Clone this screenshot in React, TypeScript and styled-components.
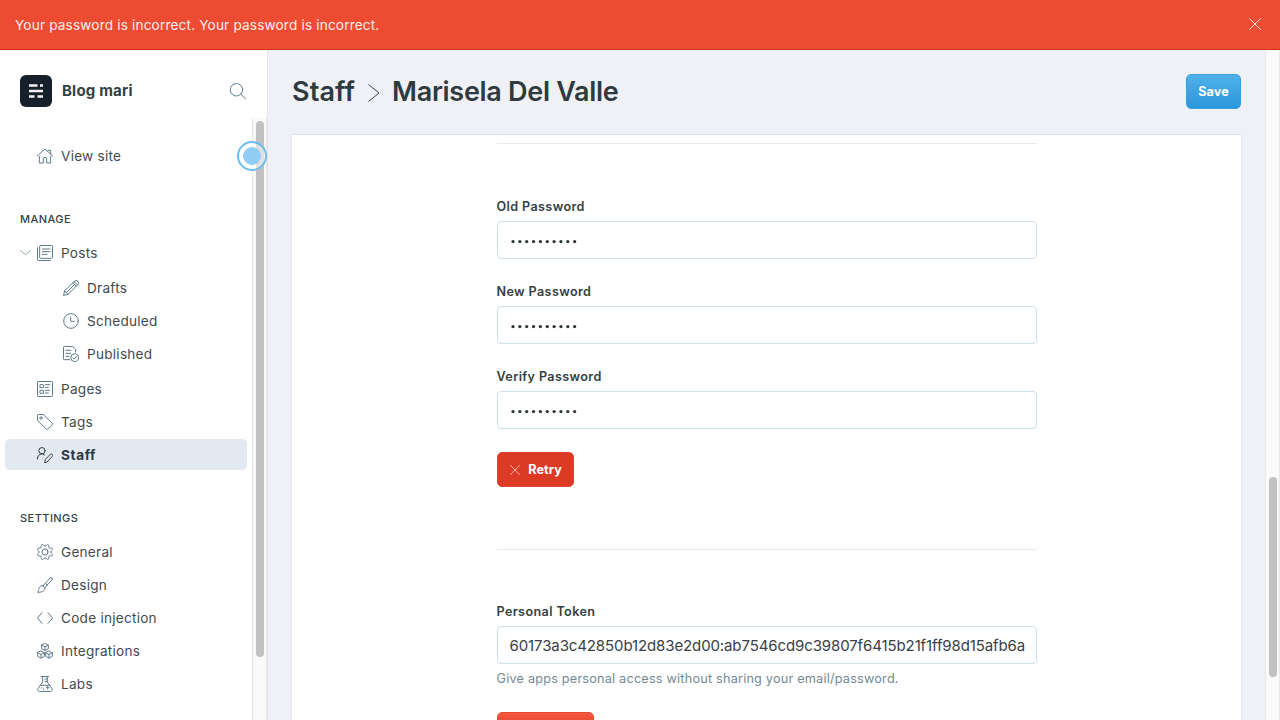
import React from 'react';
import styled, { createGlobalStyle, css } from 'styled-components';

const GlobalStyle = createGlobalStyle`
  *, *::before, *::after { box-sizing: border-box; }
  body {
    margin: 0;
    overflow: hidden;
    font-family: Inter, "Liberation Sans", sans-serif;
    color: #394047;
    background: #fff;
  }
  h2, p { margin: 0; }
  svg { display: block; }
`;

const Page = styled.div`
  position: relative;
  width: 1280px;
  height: 720px;
  display: flex;
  flex-direction: column;
  overflow: hidden;
`;

const Alert = styled.header`
  flex: none;
  height: 50px;
  display: flex;
  align-items: center;
  justify-content: space-between;
  padding: 0 19px 1px 15px;
  color: #fdeeec;
  background: #ed4b32;
  border-bottom: 1px solid #d3301a;
  font-size: 13.6px;
  line-height: 18px;
  font-weight: 400;
  letter-spacing: 0.17px;
`;

const AlertText = styled.span`
  padding-top: 1px;
`;

const Body = styled.div`
  flex: 1;
  min-height: 0;
  display: flex;
`;

const Sidebar = styled.nav`
  flex: none;
  width: 268px;
  display: flex;
  flex-direction: column;
  border-right: 1px solid #e2e5ea;
  background: #fff;
`;

const Brand = styled.div`
  flex: none;
  height: 68px;
  display: flex;
  align-items: center;
  padding: 14px 21px 0 20px;
`;

const BrandName = styled.div`
  flex: 1;
  margin-left: 10px;
  font-size: 15px;
  line-height: 20px;
  font-weight: 700;
  letter-spacing: 0.2px;
  color: #343f44;
`;

const MenuArea = styled.div`
  flex: 1;
  min-height: 0;
  display: flex;
`;

const Menu = styled.div`
  flex: 1;
  overflow: hidden;
  padding: 22px 5px 0;
`;

const Section = styled.div`
  margin-bottom: 33px;
`;

const SectionTitle = styled.div`
  height: 33px;
  padding: 7px 0 0 15px;
  font-size: 11px;
  line-height: 16px;
  font-weight: 500;
  letter-spacing: 0.45px;
  color: #343f44;
`;

const SubList = styled.div`
  margin: 4px 0;
  padding-bottom: 0.01px;
`;

const Item = styled.div<{ $active?: boolean; $nested?: boolean }>`
  height: 31px;
  margin-bottom: 2px;
  display: flex;
  align-items: center;
  padding-left: ${p => (p.$nested ? 58 : 15)}px;
  border-radius: 5px;
  font-size: 13.6px;
  line-height: 20px;
  letter-spacing: 0.25px;
  color: ${p => (p.$active ? '#2f3740' : '#3f4a50')};
  stroke: ${p => (p.$active ? '#343f44' : '#5f7b87')};
  ${p => p.$active && css`background: #e2e9f1; font-weight: 700; letter-spacing: 0.6px;`}
`;

const Caret = styled.span`
  width: 11px;
  margin-right: 6px;
  opacity: 0.75;
`;

const ItemLabel = styled.span`
  margin-left: 8px;
`;

const ScrollTrack = styled.div`
  flex: none;
  width: 15px;
  padding: 3px 2px 0 3px;
  background: #fafafa;
  border: solid #e8e8e8;
  border-width: 0 1px;
`;

const ScrollThumb = styled.div<{ $top: number; $height: number }>`
  width: 8px;
  height: ${p => p.$height}px;
  margin-top: ${p => p.$top}px;
  border-radius: 4px;
  background: #c1c1c1;
`;

const Main = styled.main`
  flex: 1;
  min-width: 0;
  display: flex;
  flex-direction: column;
  padding: 0 23px;
  background: #f0f1f6;
`;

const TitleBar = styled.div`
  flex: none;
  height: 84px;
  display: flex;
  align-items: center;
  justify-content: space-between;
  padding: 0 1px 2px;
`;

const Title = styled.h2`
  display: flex;
  align-items: center;
  padding-top: 1px;
  font-size: 27px;
  line-height: 36px;
  font-weight: 600;
  color: #2f3a3f;
`;

const Crumb = styled.span<{ $tracking: number }>`
  letter-spacing: ${p => p.$tracking}px;
`;

const Separator = styled.span`
  margin: 2px 12px 0 13px;
`;

const buttonTones = {
  blue: css`background: linear-gradient(#4fb1e9, #2b97dc); border-color: #3a9fdf;`,
  red: css`background: #dc3a24; border-color: #e0452f; padding-left: 2px;`,
  lightRed: css`background: linear-gradient(#f0573f, #e0371d); border-color: #e8482f;`,
};

const Button = styled.button<{ $tone: keyof typeof buttonTones; $width: number }>`
  width: ${p => p.$width}px;
  height: 35px;
  display: flex;
  align-items: center;
  justify-content: center;
  gap: 8px;
  padding: 0;
  border: 1px solid;
  border-radius: 5px;
  font: 700 12.6px/19px Inter, sans-serif;
  letter-spacing: 0.1px;
  color: #fff;
  ${p => buttonTones[p.$tone]}
`;

const Card = styled.section`
  flex: 1;
  min-height: 0;
  overflow: hidden;
  display: flex;
  justify-content: center;
  margin: 0 1px;
  border-top: 1px solid #d6e5ee;
  background: #fff;
  box-shadow: 0 1px 2px rgba(60, 90, 90, 0.16);
`;

const Form = styled.div`
  width: 540px;
  padding-top: 8px;
`;

const Divider = styled.div<{ $after: number }>`
  height: 1px;
  margin-bottom: ${p => p.$after}px;
  background: #e3ebf0;
`;

const Field = styled.div`
  margin-bottom: 23px;
`;

const Label = styled.label`
  display: block;
  height: 24px;
  font-size: 12.6px;
  line-height: 19px;
  font-weight: 600;
  letter-spacing: 0.38px;
  color: #343f44;
`;

const Control = styled.div`
  height: 38px;
  display: flex;
  align-items: center;
  padding: 0 12px;
  border: 1px solid #cfdee7;
  border-radius: 4px;
  font-size: 15px;
  letter-spacing: -0.11px;
  white-space: nowrap;
  overflow: hidden;
  color: #394047;
`;

const Help = styled.p`
  margin-top: 5px;
  padding-bottom: 1px;
  font-size: 12.7px;
  line-height: 19px;
  letter-spacing: 0.2px;
  color: #738a94;
`;

const Actions = styled.div`
  margin-bottom: 62px;
`;

const Beacon = styled.div`
  position: absolute;
  left: 237px;
  top: 141px;
  width: 30px;
  height: 30px;
  padding: 4px;
  border: 2px solid #6dbcee;
  border-radius: 50%;
  background: rgba(255, 255, 255, 0.5);

  &::after {
    content: '';
    display: block;
    width: 18px;
    height: 18px;
    border-radius: 50%;
    background: #91cdf4;
  }
`;

const iconPaths = {
  home: <path d="M.5 12 12 1.5 23.500 12M16.500 3.500h4v5.500M3.500 12.500v10h6v-6a2.500 2.500 0 0 1 5 0v6h6v-10" />,
  posts: <><rect x="4" y=".75" width="19.250" height="19.250" rx="1.200" /><path d="M.75 4v17.750a1.500 1.500 0 0 0 1.500 1.500H20M8 6h11.500M8 10h11.500M8 14h7" /></>,
  pencil: <path d="M22.190 1.810a3.639 3.639 0 0 0-5.170.035l-14.500 14.500L.75 23.250l6.905-1.771 14.500-14.500a3.637 3.637 0 0 0 .035-5.169ZM16.606 2.260l5.134 5.134M14.512 4.354l5.135 5.134M2.521 16.344l5.139 5.130M17 7 5 19" />,
  clock: <><circle cx="12" cy="12" r="11" /><path d="M11.500 6v6.500H17" /></>,
  published: <><path d="M10 20.500H2A1.200 1.200 0 0 1 .75 19.250V2A1.200 1.200 0 0 1 2 .75h12.500L19 5v4M4.500 6.500H12M4.500 11h7M4.500 15.500h4.500" /><circle cx="17.500" cy="17.500" r="5.800" /><path d="m14.800 17.700 2 2 3.400-4" /></>,
  pages: <><rect x=".75" y=".75" width="22.500" height="22.500" rx="1.200" /><path d="M5 5.500h4.500V10H5ZM5 14h4.500v4.500H5ZM12.500 5.500H19M12.500 9.500H17M12.500 14H19M12.500 18H17" /></>,
  tag: <><path d="M.75 2v7.500L14 22.700a1.500 1.500 0 0 0 2 0l7-6.700a1.500 1.500 0 0 0 0-2L9.500.75H2A1.200 1.200 0 0 0 .75 2Z" /><circle cx="6" cy="6" r="1.700" /></>,
  staff: <><circle cx="7.500" cy="5.500" r="4.700" /><path d="M.75 18v-1.500A6.700 6.700 0 0 1 11.500 11.800M11.500 23.200l1-4.700 7.300-7.300a2.100 2.100 0 0 1 3 3L15.500 22Z" /></>,
  gear: <><circle cx="12" cy="12" r="4.500" /><path d="M10.546 2.438a1.957 1.957 0 0 0 2.908 0L14.400 1.400a1.959 1.959 0 0 1 3.410 1.413l-.071 1.400A1.958 1.958 0 0 0 19.790 6.271l1.400-.071A1.959 1.959 0 0 1 22.600 9.600l-1.040.940a1.962 1.962 0 0 0 0 2.909l1.040.942a1.959 1.959 0 0 1-1.413 3.410l-1.400-.071a1.958 1.958 0 0 0-2.056 2.056l.071 1.400A1.959 1.959 0 0 1 14.400 22.600l-.941-1.041a1.959 1.959 0 0 0-2.908 0L9.606 22.600A1.959 1.959 0 0 1 6.200 21.192l.072-1.400a1.958 1.958 0 0 0-2.056-2.056l-1.400.071A1.958 1.958 0 0 1 1.400 14.400l1.041-.942a1.957 1.957 0 0 0 0-2.908L1.400 9.606A1.958 1.958 0 0 1 2.809 6.200l1.400.071a1.958 1.958 0 0 0 2.058-2.060L6.200 2.810A1.959 1.959 0 0 1 9.606 1.400Z" /></>,
  brush: <path d="M9 13.500 19.500 1.500a2 2 0 0 1 3 3L11.500 16M9 13l3 3c.5 4-3 7-11.200 7 1.700-1.500 1.200-3.500 2-6 .9-2.800 3.700-4.200 6.200-4ZM12.500 9.500l3 3" />,
  code: <path d="M7.500 4 .75 12l6.750 8M16.500 4l6.750 8-6.750 8" />,
  boxes: <>
    {[[12, 6], [6, 17.5], [18, 17.5]].map(([x, y]) => (
      <path key={x} d={`M${x} ${y - 5.3}l5 2.500v5.300l-5 2.700-5-2.700v-5.300ZM${x - 5} ${y - 2.8}l5 2.500 5-2.500M${x} ${y}v5`} />
    ))}
  </>,
  flask: <path d="M6.500.75h11M8.500.75V9L1.500 19a2.700 2.700 0 0 0 2.200 4.200h16.600a2.700 2.700 0 0 0 2.200-4.200L15.500 9V.75M5 14h14M12 4.500h3.500M12 8h3.500M16 15.500v4M14 17.500h4M7 17.500v1M10 19.500v1" />,
  search: <><circle cx="10.500" cy="9.500" r="8.800" /><path d="m16.800 15.800 6.700 6.700" /></>,
  caret: <path d="M1 7.500 12 17 23 7.500" />,
};

type IconName = keyof typeof iconPaths;

const Icon = ({ name, size = 16, weight = 1.5 }: { name: IconName; size?: number; weight?: number }) => (
  <svg width={size} height={size} viewBox="0 0 24 24" fill="none" strokeWidth={weight} strokeLinecap="round" strokeLinejoin="round">
    {iconPaths[name]}
  </svg>
);

const Cross = ({ size, weight = 1 }: { size: number; weight?: number }) => (
  <svg width={size} height={size} viewBox="0 0 12 12" fill="none" stroke="#fff" strokeWidth={weight} strokeLinecap="round" opacity={0.85}>
    <path d="m.5.5 11 11M11.500.5l-11 11" />
  </svg>
);

const Logo = () => (
  <svg width="32" height="32" viewBox="0 0 32 32">
    <rect width="32" height="32" rx="6" fill="#15202a" />
    <path fill="#f3eff4" d="M9 9.300h8.500v2.500H9zM20 9.300h3v2.500h-3zM9 14.800h14v2.500H9zM9 20.300h5.500v2.500H9zM17.500 20.300H23v2.500h-5.500z" />
  </svg>
);

const NavItem = ({ icon, label, active, nested, open }: {
  icon: IconName; label: string; active?: boolean; nested?: boolean; open?: boolean;
}) => (
  <Item $active={active} $nested={nested}>
    {!nested && <Caret>{open && <Icon name="caret" size={11} weight={2} />}</Caret>}
    <Icon name={icon} />
    <ItemLabel>{label}</ItemLabel>
  </Item>
);

const PasswordDots = () => (
  <svg width="70" height="12" viewBox="0 0 70 12" fill="#2f383d">
    {Array.from({ length: 10 }, (_, i) => <circle key={i} cx={3 + i * 6.85} cy="7.600" r="1.650" />)}
  </svg>
);

const PasswordField = ({ label }: { label: string }) => (
  <Field>
    <Label>{label}</Label>
    <Control><PasswordDots /></Control>
  </Field>
);

export default function App() {
  return (
    <>
      <GlobalStyle />
      <Page>
        <Alert>
          <AlertText>Your password is incorrect. Your password is incorrect.</AlertText>
          <Cross size={12} />
        </Alert>
        <Body>
          <Sidebar>
            <Brand>
              <Logo />
              <BrandName>Blog mari</BrandName>
              <svg width="17" height="17" viewBox="0 0 24 24" fill="none" stroke="#5f7b87" strokeWidth="1.4" strokeLinecap="round">
                {iconPaths.search}
              </svg>
            </Brand>
            <MenuArea>
              <Menu>
                <Section><NavItem icon="home" label="View site" /></Section>
                <Section>
                  <SectionTitle>MANAGE</SectionTitle>
                  <NavItem icon="posts" label="Posts" open />
                  <SubList>
                    <NavItem icon="pencil" label="Drafts" nested />
                    <NavItem icon="clock" label="Scheduled" nested />
                    <NavItem icon="published" label="Published" nested />
                  </SubList>
                  <NavItem icon="pages" label="Pages" />
                  <NavItem icon="tag" label="Tags" />
                  <NavItem icon="staff" label="Staff" active />
                </Section>
                <Section>
                  <SectionTitle>SETTINGS</SectionTitle>
                  <NavItem icon="gear" label="General" />
                  <NavItem icon="brush" label="Design" />
                  <NavItem icon="code" label="Code injection" />
                  <NavItem icon="boxes" label="Integrations" />
                  <NavItem icon="flask" label="Labs" />
                </Section>
              </Menu>
              <ScrollTrack><ScrollThumb $top={0} $height={536} /></ScrollTrack>
            </MenuArea>
          </Sidebar>
          <Main>
            <TitleBar>
              <Title>
                <Crumb $tracking={0.1}>Staff</Crumb>
                <Separator>
                  <svg width="12" height="18" viewBox="0 0 12 18" fill="none" stroke="#343f44" strokeWidth="1">
                    <path d="m.5.5 10.500 8.500L.5 17.500" />
                  </svg>
                </Separator>
                <Crumb $tracking={-0.3}>Marisela Del Valle</Crumb>
              </Title>
              <Button $tone="blue" $width={55}>Save</Button>
            </TitleBar>
            <Card>
              <Form>
                <Divider $after={53} />
                <PasswordField label="Old Password" />
                <PasswordField label="New Password" />
                <PasswordField label="Verify Password" />
                <Actions>
                  <Button $tone="red" $width={77}><Cross size={10} weight={0.9} />Retry</Button>
                </Actions>
                <Divider $after={52} />
                <Field>
                  <Label>Personal Token</Label>
                  <Control>60173a3c42850b12d83e2d00:ab7546cd9c39807f6415b21f1ff98d15afb6a</Control>
                  <Help>Give apps personal access without sharing your email/password.</Help>
                </Field>
                <Button $tone="lightRed" $width={97} />
              </Form>
            </Card>
          </Main>
          <ScrollTrack><ScrollThumb $top={424} $height={200} /></ScrollTrack>
        </Body>
        <Beacon />
      </Page>
    </>
  );
}
